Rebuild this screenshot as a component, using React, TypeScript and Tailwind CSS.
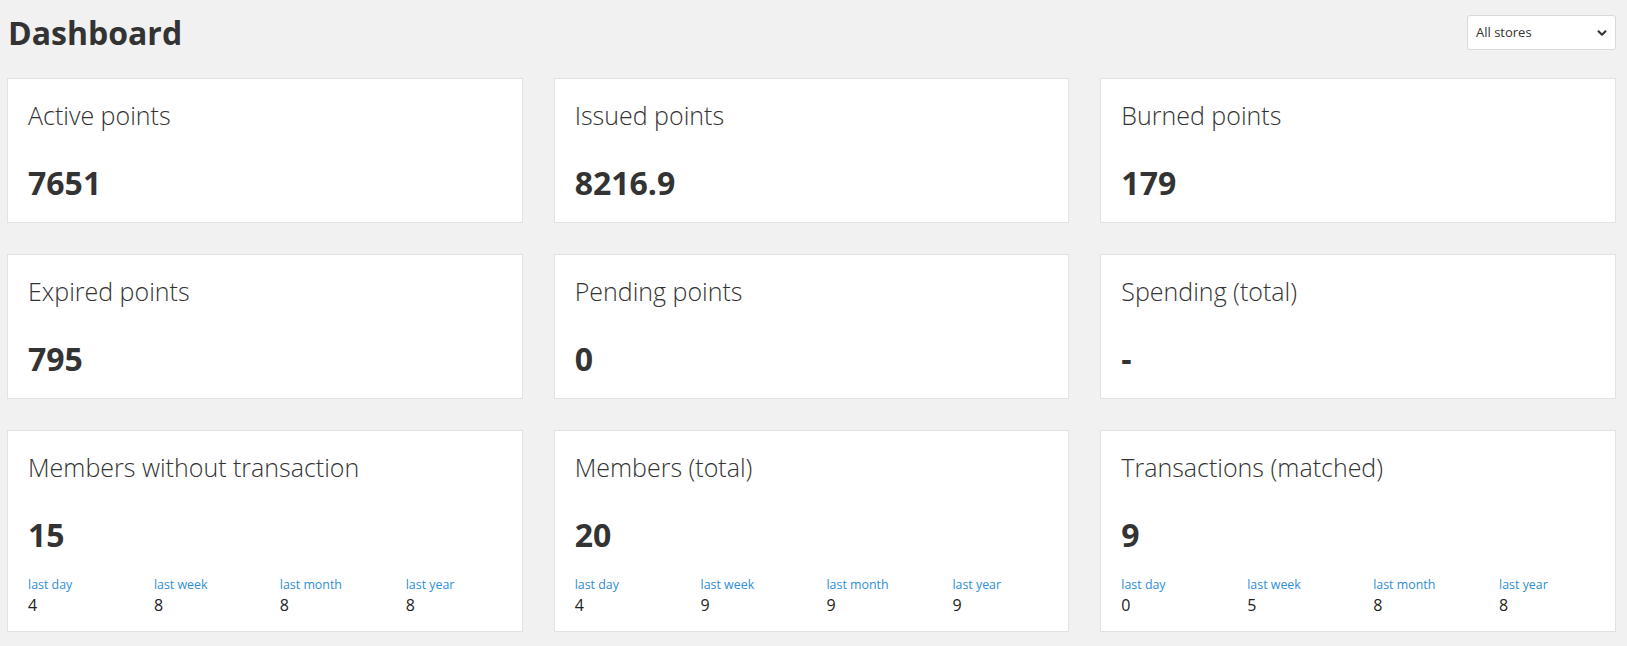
import { ChevronDown } from 'lucide-react'

type Period = { label: string; value: string }

type Card = {
  title: string
  value: string
  periods?: Period[]
}

const cards: Card[] = [
  { title: 'Active points', value: '7651' },
  { title: 'Issued points', value: '8216.9' },
  { title: 'Burned points', value: '179' },
  { title: 'Expired points', value: '795' },
  { title: 'Pending points', value: '0' },
  { title: 'Spending (total)', value: '-' },
  {
    title: 'Members without transaction',
    value: '15',
    periods: [
      { label: 'last day', value: '4' },
      { label: 'last week', value: '8' },
      { label: 'last month', value: '8' },
      { label: 'last year', value: '8' },
    ],
  },
  {
    title: 'Members (total)',
    value: '20',
    periods: [
      { label: 'last day', value: '4' },
      { label: 'last week', value: '9' },
      { label: 'last month', value: '9' },
      { label: 'last year', value: '9' },
    ],
  },
  {
    title: 'Transactions (matched)',
    value: '9',
    periods: [
      { label: 'last day', value: '0' },
      { label: 'last week', value: '5' },
      { label: 'last month', value: '8' },
      { label: 'last year', value: '8' },
    ],
  },
]

function StatCard({ card }: { card: Card }) {
  return (
    <div className="border border-[#e2e2e2] bg-white px-[20px] pt-[22px] pb-[19px]">
      <div className="text-[25px] font-light leading-[28px] text-[#333]">{card.title}</div>
      <div className="mt-[34px] text-[32px] font-bold leading-[40px] text-[#333]">{card.value}</div>
      {card.periods && (
        <div className="mt-[22px] mb-[-4px] grid grid-cols-4 gap-x-[30px]">
          {card.periods.map((p) => (
            <div key={p.label}>
              <div className="text-[12.4px] leading-[16px] text-[#2e8ed6]">{p.label}</div>
              <div className="mt-[1px] text-[16px] leading-[22px] text-[#222]">{p.value}</div>
            </div>
          ))}
        </div>
      )}
    </div>
  )
}

export default function App() {
  return (
    <div
      className="min-h-screen bg-[#f1f1f1] pl-[7px] pr-[11px] pt-[15px] pb-[20px]"
      style={{ fontFamily: '"Open Sans", sans-serif' }}
    >
      <div className="flex h-[35px] items-center justify-between">
        <h1 className="pl-[1px] text-[32px] font-bold leading-[35px] text-[#333]">Dashboard</h1>
        <button className="flex h-[35px] w-[149px] items-center justify-between rounded-[3px] border border-[#d9d9d9] bg-white pl-[8px] pr-[6px] text-[13px] text-[#333]">
          <span>All stores</span>
          <ChevronDown size={14} strokeWidth={3.5} />
        </button>
      </div>

      <div className="mt-[28px] grid grid-cols-3 gap-x-[31px] gap-y-[31px]">
        {cards.map((c) => (
          <StatCard key={c.title} card={c} />
        ))}
      </div>
    </div>
  )
}
